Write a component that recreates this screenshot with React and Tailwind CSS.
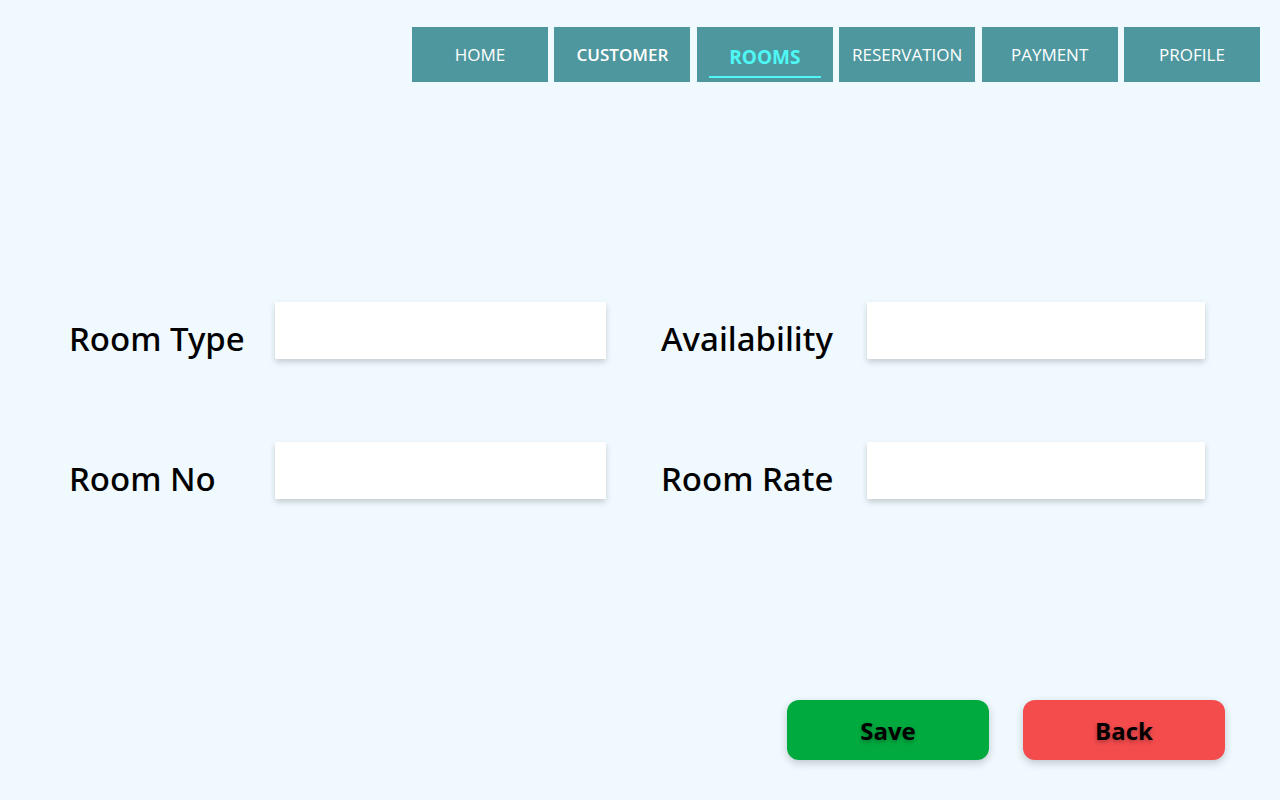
import React from 'react';

const navItems = ['HOME', 'CUSTOMER', 'ROOMS', 'RESERVATION', 'PAYMENT', 'PROFILE'];

const Field = ({ label, inputWidth }) => (
  <div className="flex items-center">
    <label
      className="w-[206px] pt-[15px] text-[33px] leading-none text-black font-medium"
      style={{ fontFamily: '"Noto Sans", "Open Sans", sans-serif' }}
    >
      {label}
    </label>
    <input
      type="text"
      className={`${inputWidth} h-[57px] bg-white shadow-[0_3px_6px_rgba(0,0,0,0.18)] outline-none px-3 text-xl`}
    />
  </div>
);

const App = () => {
  return (
    <div
      className="min-h-screen bg-[#eff9fe] flex flex-col"
      style={{ fontFamily: '"Open Sans", "Noto Sans", sans-serif' }}
    >
      <nav className="flex justify-end gap-[6.4px] pt-[27px] pr-[20px]">
        {navItems.map(item => {
          const active = item === 'ROOMS';
          return (
            <button
              key={item}
              className="w-[136px] h-[55px] bg-[#4e979e] flex items-center justify-center"
            >
              {active ? (
                <span className="flex flex-col items-center pt-[15px]">
                  <span className="text-[19px] font-bold text-[#4ff7f5] leading-tight w-[112px] text-center pb-[6px] border-b-2 border-[#4ff7f5]">
                    {item}
                  </span>
                </span>
              ) : (
                <span
                  className={`text-[17px] text-white ${item === 'CUSTOMER' ? 'font-semibold' : 'font-normal'}`}
                >
                  {item}
                </span>
              )}
            </button>
          );
        })}
      </nav>

      <div className="mt-[220px] pl-[69px] flex flex-col gap-[83px]">
        <div className="flex gap-[55px]">
          <Field label="Room Type" inputWidth="w-[331px]" />
          <Field label="Availability" inputWidth="w-[338px]" />
        </div>
        <div className="flex gap-[55px]">
          <Field label="Room No" inputWidth="w-[331px]" />
          <Field label="Room Rate" inputWidth="w-[338px]" />
        </div>
      </div>

      <div className="mt-[201px] flex justify-end gap-[34px] pr-[55px]">
        <button className="w-[202px] h-[60px] pt-[2px] rounded-xl bg-[#00aa3f] shadow-[0_3px_8px_rgba(0,0,0,0.2)] text-[24px] font-bold text-black [text-shadow:0_2px_4px_rgba(0,0,0,0.3)]">
          Save
        </button>
        <button className="w-[202px] h-[60px] pt-[2px] rounded-xl bg-[#f44b4d] shadow-[0_3px_8px_rgba(0,0,0,0.2)] text-[24px] font-bold text-black [text-shadow:0_2px_4px_rgba(0,0,0,0.3)]">
          Back
        </button>
      </div>
    </div>
  );
};

export default App;
